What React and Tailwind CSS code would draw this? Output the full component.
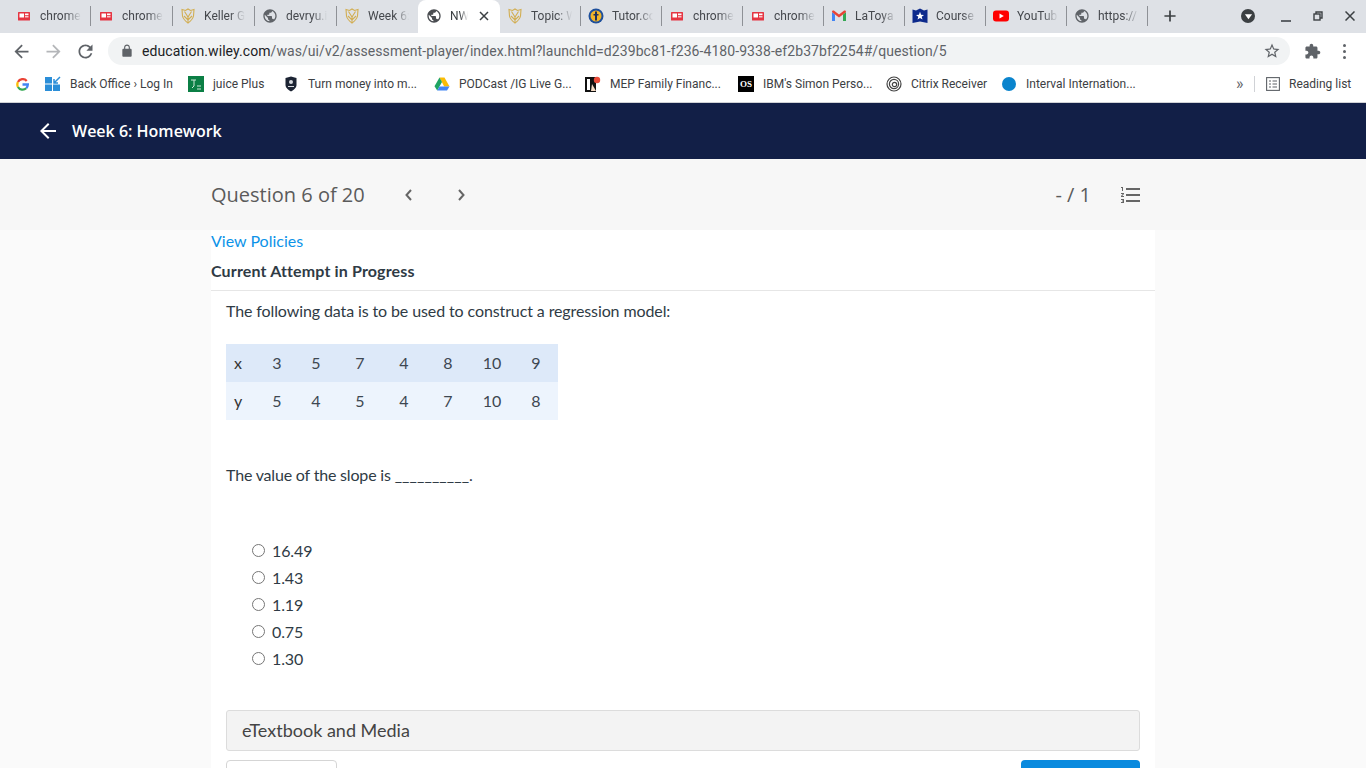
const GLOBE =
  "M12 2C6.48 2 2 6.48 2 12s4.48 10 10 10 10-4.48 10-10S17.52 2 12 2zm-1 17.93c-3.95-.49-7-3.85-7-7.93 0-.62.08-1.21.21-1.79L9 15v1c0 1.1.9 2 2 2v1.93zm6.9-2.54c-.26-.81-1-1.39-1.9-1.39h-1v-3c0-.55-.45-1-1-1H8v-2h2c.55 0 1-.45 1-1V7h2c1.1 0 2-.9 2-2v-.41c2.93 1.19 5 4.06 5 7.41 0 2.08-.8 3.97-2.1 5.39z";

function Icon({ d, className, fill = "#5f6368" }) {
  return (
    <svg viewBox="0 0 24 24" className={className} fill={fill}>
      <path d={d} />
    </svg>
  );
}

function ChromeIcon() {
  return (
    <svg viewBox="0 0 16 16" className="w-[16px] h-[16px] shrink-0">
      <rect x="2" y="4" width="12" height="8.5" rx="0.5" fill="#e53542" />
      <rect x="3.5" y="5.5" width="4.5" height="4" fill="#fff" />
      <rect x="9" y="5.5" width="3.5" height="1.7" fill="#fff" />
      <rect x="9" y="8" width="3.5" height="1.5" fill="#f9c4c8" />
    </svg>
  );
}

function ShieldIcon() {
  return (
    <svg viewBox="0 0 16 16" className="w-[16px] h-[16px] shrink-0" fill="none" stroke="#d2ae52" strokeWidth="1.1">
      <path d="M2 1.5 L5.5 2.5 L8 1 L10.5 2.5 L14 1.5 L13.5 8 C13 11 10 13.5 8 15 C6 13.5 3 11 2.5 8 Z" />
      <path d="M4.5 3.5 L8 9 L11.5 3.5 M8 9 V14 M4 8 L8 12 L12 8" />
    </svg>
  );
}

function GlobeIcon() {
  return <Icon d={GLOBE} className="w-[16px] h-[16px] shrink-0" fill="#5f6368" />;
}

function TutorIcon() {
  return (
    <svg viewBox="0 0 16 16" className="w-[16px] h-[16px] shrink-0">
      <circle cx="8" cy="8" r="7.5" fill="#1d4f9c" />
      <circle cx="8" cy="8" r="5.5" fill="#f0b429" />
      <rect x="7" y="3.5" width="2" height="9" fill="#1d2f5c" />
      <rect x="5.5" y="6" width="5" height="1.5" fill="#1d2f5c" />
    </svg>
  );
}

function GmailIcon() {
  return (
    <svg viewBox="0 0 16 16" className="w-[16px] h-[16px] shrink-0" fill="none">
      <path d="M1 4 V13 H4 V6.5 Z" fill="#4285f4" />
      <path d="M15 4 V13 H12 V6.5 Z" fill="#34a853" />
      <path d="M1 4 C1 2.5 2.5 2.3 3.5 3 L8 6.5 L12.5 3 C13.5 2.3 15 2.5 15 4 L12 6.5 L8 9.5 L4 6.5 Z" fill="#ea4335" />
    </svg>
  );
}

function CourseIcon() {
  return (
    <svg viewBox="0 0 16 16" className="w-[16px] h-[16px] shrink-0">
      <path d="M0.5 1.5 L4 2.5 L8 0.5 L12 2.5 L15.5 1.5 V15 L8 13.5 L0.5 15 Z" fill="#0d2a8c" />
      <path d="M8 3.8 L9.1 6.8 L12 6.9 L9.7 8.8 L10.5 11.6 L8 10 L5.5 11.6 L6.3 8.8 L4 6.9 L6.9 6.8 Z" fill="#fff" />
    </svg>
  );
}

function YoutubeIcon() {
  return (
    <svg viewBox="0 0 16 16" className="w-[16px] h-[16px] shrink-0">
      <rect x="0" y="2.5" width="16" height="11" rx="3" fill="#f00" />
      <path d="M6.5 5.5 L10.8 8 L6.5 10.5 Z" fill="#fff" />
    </svg>
  );
}

// titles are what is left visible of each tab, the last letters fade out
const tabs = [
  { title: "chrome", icon: <ChromeIcon /> },
  { title: "chrome", icon: <ChromeIcon /> },
  { title: "Keller G", icon: <ShieldIcon /> },
  { title: "devryu.i", icon: <GlobeIcon /> },
  { title: "Week 6:", icon: <ShieldIcon /> },
  { active: true },
  { title: "Topic: W", icon: <ShieldIcon /> },
  { title: "Tutor.co", icon: <TutorIcon /> },
  { title: "chrome", icon: <ChromeIcon /> },
  { title: "chrome", icon: <ChromeIcon /> },
  { title: "LaToya", icon: <GmailIcon /> },
  { title: "Course", icon: <CourseIcon /> },
  { title: "YouTub", icon: <YoutubeIcon /> },
  { title: "https://", icon: <GlobeIcon /> },
];

function TabStrip() {
  return (
    <div className="h-[33px] bg-[#dee1e6] flex items-center pl-[9px] pb-[1px] font-['Roboto',sans-serif] text-[12px] text-[#45484d]">
      {tabs.map((tab, i) =>
        tab.active ? (
          <div key={i} className="w-[82px] h-[33px] mb-[-1px] bg-white rounded-t-[8px] flex items-center pb-[1px] pl-[8px] text-[#3c4043]">
            <Icon d={GLOBE} className="w-[16px] h-[16px] shrink-0" fill="#4a4d51" />
            <span className="ml-[8px] w-[18px] whitespace-nowrap [mask-image:linear-gradient(to_right,#000_55%,transparent)]">NWI</span>
            <svg viewBox="0 0 10 10" className="w-[10px] h-[10px] ml-[11px]" stroke="#3c4043" strokeWidth="1.5">
              <path d="M1 1 L9 9 M9 1 L1 9" />
            </svg>
          </div>
        ) : (
          <div
            key={i}
            className={`h-[20px] shrink-0 flex items-center gap-[8px] pl-[7px] ${i < 4 ? "w-[82px]" : "w-[81px]"} ${
              i === 4 ? "" : "border-r border-[#8e9196]"
            }`}
          >
            {tab.icon}
            <span className="w-[42px] whitespace-nowrap [mask-image:linear-gradient(to_right,#000_62%,transparent_98%)]">{tab.title}</span>
          </div>
        )
      )}
      <svg viewBox="0 0 14 14" className="w-[12px] h-[12px] ml-[16px]" stroke="#3c4043" strokeWidth="2">
        <path d="M7 0.5 V13.5 M0.5 7 H13.5" />
      </svg>
      <div className="ml-[65px] w-[14px] h-[14px] rounded-full bg-[#3c4043] flex items-center justify-center">
        <svg viewBox="0 0 10 10" className="w-[9px] h-[9px]" fill="#fff">
          <path d="M1 2.5 H9 L5 8 Z" />
        </svg>
      </div>
      <div className="ml-[26px] w-[10px] h-[2px] bg-[#5f6368] mt-[9px]" />
      <svg viewBox="0 0 10 10" className="w-[10px] h-[10px] ml-[22px]" fill="none" stroke="#3c4043" strokeWidth="1.4">
        <path d="M3 3 V1 H9 V7 H7" />
        <rect x="1" y="3" width="6" height="6" />
      </svg>
      <svg viewBox="0 0 10 10" className="w-[10px] h-[10px] ml-[22px]" stroke="#3c4043" strokeWidth="1.5">
        <path d="M0.5 0.5 L9.5 9.5 M9.5 0.5 L0.5 9.5" />
      </svg>
    </div>
  );
}

function Toolbar() {
  return (
    <div className="h-[33px] pt-[3px] bg-white flex items-center font-['Roboto',sans-serif]">
      <Icon d="M20 11H7.83l5.59-5.59L12 4l-8 8 8 8 1.41-1.41L7.83 13H20v-2z" className="w-[21px] h-[21px] ml-[11px]" />
      <Icon d="M12 4l-1.41 1.41L16.17 11H4v2h12.17l-5.58 5.59L12 20l8-8z" className="w-[21px] h-[21px] ml-[11px]" fill="#b4b6b9" />
      <Icon d="M17.65 6.35C16.2 4.9 14.21 4 12 4c-4.42 0-7.99 3.58-7.99 8s3.57 8 7.99 8c3.73 0 6.84-2.55 7.73-6h-2.08c-.82 2.33-3.04 4-5.65 4-3.31 0-6-2.69-6-6s2.69-6 6-6c1.66 0 3.14.69 4.22 1.78L13 11h7V4l-2.35 2.35z" className="w-[21px] h-[21px] ml-[11px]" />
      <div className="ml-[12px] w-[1182px] h-[28px] rounded-full bg-[#f1f3f4] flex items-center pl-[12px] pr-[9px]">
        <svg viewBox="0 0 24 24" className="w-[14px] h-[14px] shrink-0" fill="#5f6368">
          <path d="M18 8h-1V6c0-2.76-2.24-5-5-5S7 3.24 7 6v2H6c-1.1 0-2 .9-2 2v10c0 1.1.9 2 2 2h12c1.1 0 2-.9 2-2V10c0-1.1-.9-2-2-2zM9 6c0-1.66 1.34-3 3-3s3 1.34 3 3v2H9V6z" />
        </svg>
        <span className="ml-[8px] text-[14px] tracking-[0.07px] text-[#202124]">education.wiley.com</span>
        <span className="text-[14px] tracking-[0.07px] text-[#5f6368]">/was/ui/v2/assessment-player/index.html?launchId=d239bc81-f236-4180-9338-ef2b37bf2254#/question/5</span>
        <Icon d="M22 9.24l-7.19-.62L12 2 9.19 8.63 2 9.24l5.46 4.73L5.82 21 12 17.27 18.18 21l-1.63-7.03L22 9.24zM12 15.4l-3.76 2.27 1-4.28-3.32-2.88 4.38-.38L12 6.1l1.71 4.04 4.38.38-3.32 2.88 1 4.28L12 15.4z" className="w-[18px] h-[18px] ml-auto" />
      </div>
      <Icon d="M20.5 11H19V7c0-1.1-.9-2-2-2h-4V3.5C13 2.12 11.88 1 10.5 1S8 2.12 8 3.5V5H4c-1.1 0-1.99.9-1.99 2v3.8H3.5c1.49 0 2.7 1.21 2.7 2.7s-1.21 2.7-2.7 2.7H2V20c0 1.1.9 2 2 2h3.8v-1.5c0-1.49 1.21-2.7 2.7-2.7 1.49 0 2.7 1.21 2.7 2.7V22H17c1.1 0 2-.9 2-2v-4h1.5c1.38 0 2.5-1.12 2.5-2.5S21.88 11 20.5 11z" className="w-[17px] h-[17px] ml-[14px]" />
      <div className="ml-[22px] flex flex-col gap-[3px]">
        <div className="w-[3px] h-[3px] rounded-full bg-[#5f6368]" />
        <div className="w-[3px] h-[3px] rounded-full bg-[#5f6368]" />
        <div className="w-[3px] h-[3px] rounded-full bg-[#5f6368]" />
      </div>
    </div>
  );
}

const bookmarks = [
  {
    w: "w-[143px]",
    label: "Back Office › Log In",
    icon: (
      <svg viewBox="0 0 16 16" className="w-[16px] h-[16px]">
        <rect x="0" y="1" width="7" height="6.5" fill="#2b8ed8" />
        <rect x="0" y="8.5" width="7" height="6.5" fill="#2b8ed8" />
        <rect x="8" y="8.5" width="7" height="6.5" fill="#2b8ed8" />
        <path d="M9 7 L15 1 M9 3 V7 H13" stroke="#2b8ed8" strokeWidth="1.5" fill="none" />
      </svg>
    ),
  },
  {
    w: "w-[95px]",
    label: "juice Plus",
    icon: (
      <svg viewBox="0 0 16 16" className="w-[16px] h-[16px]">
        <rect width="16" height="16" fill="#0b7f45" />
        <path d="M3 4 H8 M6 4 V10 L4 12 M9 10 H13 M9 13 H13" stroke="#cfe8d9" strokeWidth="1" fill="none" />
      </svg>
    ),
  },
  {
    w: "w-[151px]",
    label: "Turn money into m...",
    icon: (
      <svg viewBox="0 0 16 16" className="w-[16px] h-[16px]">
        <path d="M2.5 2 L8 0.5 L13.5 2 V9 C13.5 12 10 14.5 8 15.5 C6 14.5 2.5 12 2.5 9 Z" fill="#1c2433" />
        <circle cx="8" cy="6" r="2" fill="#d8dbe0" />
        <rect x="5" y="10" width="6" height="1" fill="#d8dbe0" />
      </svg>
    ),
  },
  {
    w: "w-[151px]",
    label: "PODCast /IG Live G...",
    icon: (
      <svg viewBox="0 0 16 16" className="w-[16px] h-[16px]">
        <path d="M5.5 1.5 H10.5 L15.5 10.5 H10.2 Z" fill="#fbbc04" />
        <path d="M5.5 1.5 L8 6 L3.2 14.5 L0.5 10.3 Z" fill="#1fa463" />
        <path d="M5.5 10.5 H15.5 L13 14.5 H3.2 Z" fill="#4285f4" />
      </svg>
    ),
  },
  {
    w: "w-[153px]",
    label: "MEP Family Financ...",
    icon: (
      <svg viewBox="0 0 16 16" className="w-[16px] h-[16px]">
        <rect x="0" y="1" width="11" height="15" fill="#111" />
        <rect x="2" y="3" width="3" height="11" fill="#fff" />
        <path d="M7 8 L11 15 H6 Z" fill="#f3d9c2" />
        <circle cx="12" cy="4" r="3.2" fill="#ea4c3a" />
      </svg>
    ),
  },
  {
    w: "w-[148px]",
    label: "IBM's Simon Perso...",
    icon: (
      <div className="w-[16px] h-[16px] bg-black text-white text-[9px] leading-[16px] font-bold font-['Liberation_Serif',serif] text-center">
        OS
      </div>
    ),
  },
  {
    w: "w-[115px]",
    label: "Citrix Receiver",
    icon: (
      <svg viewBox="0 0 16 16" className="w-[16px] h-[16px]" fill="none" stroke="#444" strokeWidth="1.2">
        <circle cx="8" cy="8" r="7" />
        <circle cx="8" cy="8" r="4.6" />
        <circle cx="8.5" cy="8.5" r="2.2" />
      </svg>
    ),
  },
  {
    w: "w-[236px]",
    label: "Interval Internation...",
    icon: <div className="w-[14px] h-[14px] ml-[1px] mt-[1px] rounded-full bg-[#0a84cd]" />,
  },
];

function BookmarkBar() {
  return (
    <div className="h-[37px] bg-white border-b border-[#d0d2d6] flex items-center font-['Roboto',sans-serif] text-[12px] text-[#3c4043]">
      <svg viewBox="0 0 16 16" className="w-[13px] h-[13px] ml-[16px]" fill="none" strokeWidth="2.8">
        <path d="M13.2 3.6 A6.6 6.6 0 0 0 2.4 5" stroke="#ea4335" />
        <path d="M2.4 5 A6.6 6.6 0 0 0 2.4 11" stroke="#fbbc05" />
        <path d="M2.4 11 A6.6 6.6 0 0 0 12.6 12.6" stroke="#34a853" />
        <path d="M12.6 12.6 A6.6 6.6 0 0 0 14.6 8 H8" stroke="#4285f4" />
      </svg>
      <div className="ml-[16px] flex items-center">
        {bookmarks.map((b) => (
          <div key={b.label} className={`${b.w} shrink-0 flex items-center gap-[9px] whitespace-nowrap`}>
            <div className="w-[16px] h-[16px] shrink-0">{b.icon}</div>
            <span>{b.label}</span>
          </div>
        ))}
      </div>
      <span className="ml-[-1px] w-[12px] text-[16px] leading-[16px] text-[#5f6368]">»</span>
      <div className="ml-[6px] w-[1px] h-[16px] bg-[#d0d2d6]" />
      <svg viewBox="0 0 14 14" className="w-[14px] h-[14px] ml-[11px]" fill="none" stroke="#5f6368" strokeWidth="1.1">
        <rect x="0.6" y="0.6" width="12.8" height="12.8" />
        <path d="M3 4 H5 M6.5 4 H11 M3 7 H5 M6.5 7 H11 M3 10 H5 M6.5 10 H11" />
      </svg>
      <span className="ml-[9px] whitespace-nowrap">Reading list</span>
    </div>
  );
}

const tableRows = [
  ["x", 3, 5, 7, 4, 8, 10, 9],
  ["y", 5, 4, 5, 4, 7, 10, 8],
];

const options = ["16.49", "1.43", "1.19", "0.75", "1.30"];

export default function App() {
  return (
    <div className="h-[768px] overflow-hidden bg-[#fafafa] font-['Lato',sans-serif]">
      <TabStrip />
      <Toolbar />
      <BookmarkBar />

      <div className="h-[56px] bg-[#121f47] flex items-center pl-[36px] text-white font-['Open_Sans',sans-serif]">
        <svg viewBox="0 0 24 24" className="w-[24px] h-[24px]" fill="#fff">
          <path d="M20 11H7.83l5.59-5.59L12 4l-8 8 8 8 1.41-1.41L7.83 13H20v-2z" />
        </svg>
        <span className="ml-[12px] text-[16px] font-semibold">Week 6: Homework</span>
      </div>

      <div className="h-[71px] bg-[#f7f7f7] flex items-center pl-[211px] pr-[223px] text-[#5b5b5b] font-['Open_Sans',sans-serif]">
        <span className="text-[20px]">Question 6 of 20</span>
        <svg viewBox="0 0 24 24" className="w-[24px] h-[24px] ml-[32px]" fill="none" stroke="#666" strokeWidth="2">
          <path d="M14 7 L9.5 12 L14 17" />
        </svg>
        <svg viewBox="0 0 24 24" className="w-[24px] h-[24px] ml-[28px]" fill="none" stroke="#666" strokeWidth="2">
          <path d="M10 7 L14.5 12 L10 17" />
        </svg>
        <span className="ml-auto text-[20px]">- / 1</span>
        <Icon
          d="M2 17h2v.5H3v1h1v.5H2v1h3v-4H2v1zm1-9h1V4H2v1h1v3zm-1 3h1.8L2 13.1v.9h3v-1H3.2L5 10.9V10H2v1zm5-6v2h14V5H7zm0 14h14v-2H7v2zm0-6h14v-2H7v2z"
          className="w-[24px] h-[24px] ml-[28px]"
          fill="#666"
        />
      </div>

      <div className="ml-[211px] w-[944px] bg-white text-[#2f3b45] text-[16px]">
        <div className="h-[61px] border-b border-[#e6e6e6] flex flex-col">
          <a className="h-[22px] leading-[22px] text-[#0d93e8]">View Policies</a>
          <div className="mt-[8px] h-[22px] leading-[22px] font-bold tracking-[0.15px]">Current Attempt in Progress</div>
        </div>

        <div className="px-[15px]">
          <p className="mt-[9px] h-[22px] leading-[22px] tracking-[-0.11px]">The following data is to be used to construct a regression model:</p>

          <div className="mt-[22px] w-[332px] text-[#3d4751]">
            {tableRows.map((row, r) => (
              <div
                key={r}
                className={`h-[38px] grid grid-cols-[34px_34px_44px_44px_44px_44px_44px_44px] items-center ${
                  r === 0 ? "bg-[#dde9f9]" : "bg-[#edf4fd]"
                }`}
              >
                {row.map((cell, c) => (
                  <span key={c} className={c === 0 ? "pl-[8px] text-[#333]" : "text-center"}>
                    {cell}
                  </span>
                ))}
              </div>
            ))}
          </div>

          <p className="mt-[44px] h-[22px] leading-[22px]">
            <span className="tracking-[-0.18px]">The value of the slope is </span>
            <span className="tracking-[0.1px]">__________</span>.
          </p>

          <div className="mt-[51px] pl-[26px] flex flex-col">
            {options.map((opt) => (
              <label key={opt} className="h-[27px] flex items-center text-[#2f3b45]">
                <input type="radio" name="answer" className="w-[13px] h-[13px] m-0" />
                <span className="ml-[7px] tracking-[-0.1px]">{opt}</span>
              </label>
            ))}
          </div>

          <div className="mt-[38px] h-[41px] bg-[#f3f3f3] border border-[#dcdcdc] rounded-[3px] flex items-center pl-[15px] text-[18px] text-[#444]">
            eTextbook and Media
          </div>

          <div className="mt-[9px] flex justify-between">
            <div className="w-[111px] h-[40px] bg-white border border-[#d5d5d5] rounded-[4px]" />
            <div className="w-[119px] h-[40px] bg-[#0a8ade] rounded-[4px]" />
          </div>
        </div>
      </div>
    </div>
  );
}
